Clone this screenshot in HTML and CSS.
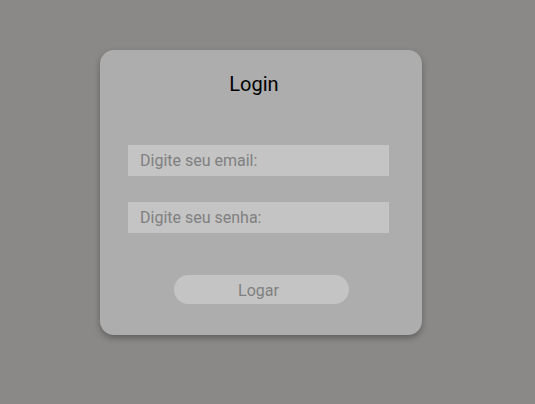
FILE: index.html
```html
<!DOCTYPE html>
<html lang="pt">
<head>
<meta charset="utf-8">
<link rel="stylesheet" href="styles.css">
</head>
<body>
  <main class="card">
    <h1 class="title">Login</h1>
    <form class="form">
      <input class="field" type="email" placeholder="Digite seu email:">
      <input class="field" type="password" placeholder="Digite seu senha:">
      <button class="btn" type="button">Logar</button>
    </form>
  </main>
</body>
</html>
```
FILE: styles.css
```css
html, body {
  margin: 0;
  padding: 0;
}
body {
  background: #8a8987;
  width: 535px;
  height: 404px;
  font-family: Roboto, "Liberation Sans", sans-serif;
  padding-top: 50px;
  padding-left: 100px;
  box-sizing: border-box;
}
.card {
  width: 322px;
  height: 285px;
  box-sizing: border-box;
  background: #adadad;
  border-radius: 14px;
  box-shadow: 0 3px 6px rgba(0, 0, 0, 0.3);
  padding: 22px 33px 0 28px;
}
.title {
  margin: 0;
  font-weight: 400;
  font-size: 20px;
  line-height: 24px;
  color: #000;
  text-align: center;
  padding-right: 9px;
}
.form {
  display: flex;
  flex-direction: column;
  align-items: flex-start;
  margin-top: 49px;
}
.field {
  width: 261px;
  height: 31px;
  box-sizing: border-box;
  border: none;
  outline: none;
  background: #c4c4c4;
  padding: 0 12px;
  font-family: Roboto, "Liberation Sans", sans-serif;
  font-size: 16px;
  color: #808080;
  margin: 0 0 26px 0;
}
.field::placeholder {
  color: #808080;
  opacity: 1;
}
.field + .field {
  margin-bottom: 42px;
}
.btn {
  align-self: flex-start;
  margin-left: 46px;
  width: 175px;
  height: 29px;
  border: none;
  border-radius: 15px;
  background: #c4c4c4;
  font-family: Roboto, "Liberation Sans", sans-serif;
  font-size: 16px;
  color: #808080;
  padding: 1px 6px 0 0;
}
```
